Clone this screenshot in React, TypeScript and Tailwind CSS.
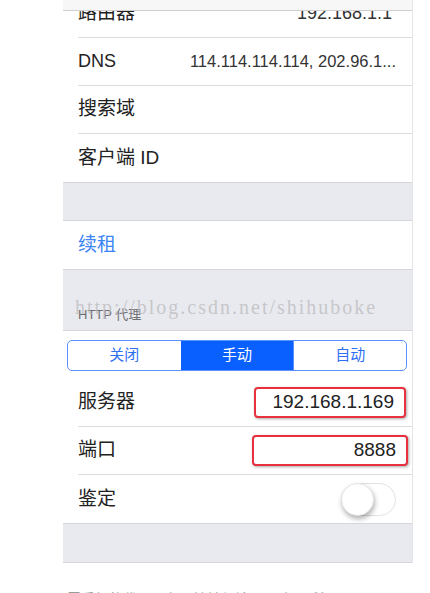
const cjk = '"Liberation Sans", "Noto Sans CJK SC", sans-serif';

type RowProps = { label: string; value?: string; valueClass?: string; last?: boolean; children?: React.ReactNode; labelClass?: string; pr?: string };

// 一行の設定セル（左インセットの区切り線つき）
const Row = ({ label, value, valueClass, last, children, labelClass, pr }: RowProps) => (
  <div className="pl-[15px] bg-white">
    <div className={`flex h-[48px] items-center justify-between ${pr ?? 'pr-[16px]'} ${last ? '' : 'border-b border-[#dcdce0]'}`}>
      <span className={labelClass ?? 'text-[19px] text-[#222]'}>{label}</span>
      {value && <span className={valueClass ?? 'text-[16.5px] text-[#333]'}>{value}</span>}
      {children}
    </div>
  </div>
);

const Gray = ({ className, children }: { className: string; children?: React.ReactNode }) => (
  <div className={`bg-[#e9eaef] border-y border-[#d6d6db] ${className}`}>{children}</div>
);

// 赤枠で強調された入力欄
const Boxed = ({ value, width }: { value: string; width: string }) => (
  <div className={`flex h-[31px] ${width} items-center justify-end rounded-[4px] border-[2.5px] border-[#e8303f] bg-white pr-[10px] text-[19px] text-[#222] shadow-[1px_1px_3px_rgba(0,0,0,0.35)]`}>
    {value}
  </div>
);

export default function App() {
  return (
    <div className="relative h-[593px] w-[430px] overflow-hidden bg-white" style={{ fontFamily: cjk }}>
      <div className="relative ml-[63px] flex w-[350px] flex-col border-r border-[#e4e4e4]">
        {/* 上部ナビバー（行を覆う） */}
        <div className="absolute left-0 right-0 top-0 z-10 h-[11px] border-b border-[#cfcfd2] bg-[#f7f7f7]" />

        <div className="-mt-[10px]">
          <Row label="路由器" value="192.168.1.1" valueClass="text-[18px] text-[#333]" pr="pr-[20px]" />
          <Row label="DNS" labelClass="text-[18px] text-[#222]" value="114.114.114.114, 202.96.1..." />
          <Row label="搜索域" />
          <Row label="客户端 ID" last />
        </div>

        <Gray className="h-[39px]" />
        <Row label="续租" labelClass="text-[19px] text-[#3d84f5]" last />

        <Gray className="relative flex h-[62px] items-end pb-[6px] pl-[15px]">
          <span className="text-[13px] text-[#6d6d72]">HTTP 代理</span>
        </Gray>

        {/* セグメントコントロール */}
        <div className="flex h-[48px] items-center bg-white pl-[4px] pr-[5px]">
          <div className="grid h-[31px] w-full grid-cols-3 overflow-hidden rounded-[5px] border border-[#5a90ff] text-[15px]">
            <div className="flex items-center justify-center text-[#2f6ff5]">关闭</div>
            <div className="flex items-center justify-center bg-[#0a5fff] text-white">手动</div>
            <div className="flex items-center justify-center border-l border-[#5a90ff] text-[#2f6ff5]">自动</div>
          </div>
        </div>

        <Row label="服务器" pr="pr-[6px]">
          <Boxed value="192.168.1.169" width="w-[152px]" />
        </Row>
        <Row label="端口" pr="pr-[4px]">
          <Boxed value="8888" width="w-[156px]" />
        </Row>
        <Row label="鉴定" last>
          <div className="relative h-[33px] w-[55px] rounded-full border border-[#e2e2e2] bg-white">
            <div className="absolute -left-[1px] -top-[1px] h-[33px] w-[33px] rounded-full border border-[#e6e6e6] bg-white shadow-[1px_3px_5px_rgba(0,0,0,0.3)]" />
          </div>
        </Row>

        <Gray className="h-[40px]" />
      </div>

      {/* ウォーターマーク */}
      <div
        className="pointer-events-none absolute left-[75px] top-[292px] text-[20px] tracking-[2px] text-[#bdbdc0]/80"
        style={{ fontFamily: '"Liberation Serif", serif' }}
      >
        http://blog.csdn.net/shihuboke
      </div>

      {/* 下部キャプション（切れている） */}
      <p className="absolute left-[4px] top-[589px] text-[14px] text-[#888]">
        图 &nbsp; &nbsp; &nbsp; &nbsp; 设置手机的代理服务器地址与端口 &nbsp; &nbsp; 如图所示
      </p>
    </div>
  );
}
